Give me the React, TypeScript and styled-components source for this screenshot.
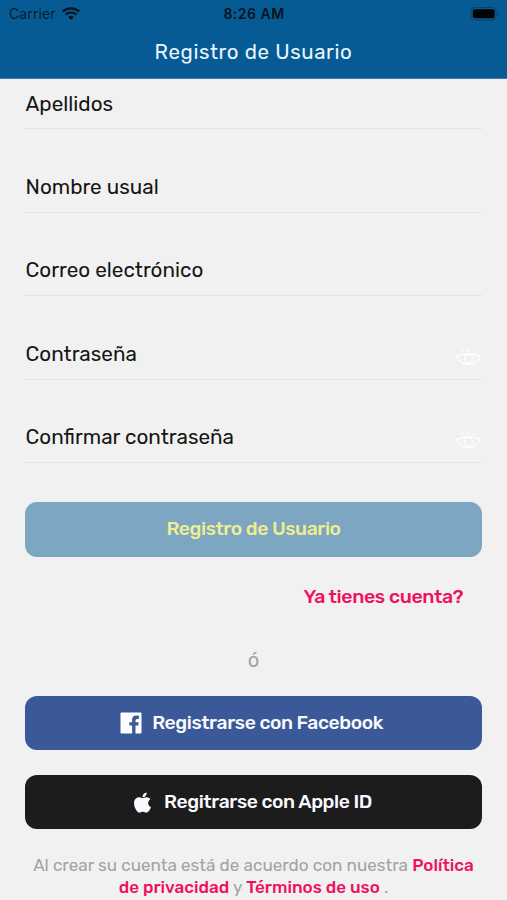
import React from 'react';
import styled, { createGlobalStyle } from 'styled-components';
import { FaApple } from 'react-icons/fa';

const GlobalStyle = createGlobalStyle`
  * { box-sizing: border-box; }
  body { margin: 0; background: #f1f1f1; }
`;

const Screen = styled.main`
  width: 507px;
  height: 900px;
  overflow: hidden;
  display: flex;
  flex-direction: column;
  background: #f1f1f1;
  color: #161616;
  font-family: Rubik, Roboto, sans-serif;
`;

const Header = styled.header`
  flex: none;
  height: 79px;
  background: #075b94;
  border-bottom: 1px solid #3c7ba8;
`;

const StatusBar = styled.div`
  height: 27px;
  padding: 1px 8px 0 9px;
  display: grid;
  grid-template-columns: 1fr auto 1fr;
  align-items: center;
  color: #07131c;
  font-family: Inter, sans-serif;
  font-size: 14px;
  line-height: 26px;
`;

const Carrier = styled.div`
  display: flex;
  align-items: center;
  gap: 6px;
  color: #051c2e;
  letter-spacing: 0.1px;
`;

const Clock = styled.time`
  font-size: 14px;
  font-weight: 600;
  letter-spacing: 0.5px;
`;

const BatterySlot = styled.div`
  display: flex;
  justify-content: flex-end;
`;

const Title = styled.h1`
  margin: 0;
  padding-top: 12px;
  text-align: center;
  color: #e9f5ff;
  font-size: 20.5px;
  line-height: 26px;
  font-weight: 400;
  letter-spacing: 0.6px;
`;

const Form = styled.form`
  padding: 0 25px;
  display: flex;
  flex-direction: column;
`;

const Fields = styled.div`
  height: 384px;
  display: flex;
  flex-direction: column;
  justify-content: flex-end;
`;

const Field = styled.div<{ $first?: boolean }>`
  flex: none;
  height: ${({ $first }) => ($first ? '50px' : '83.5px')};
  padding-bottom: ${({ $first }) => ($first ? '11px' : '11.6px')};
  border-bottom: 1px solid #e2e2e2;
  display: flex;
  align-items: flex-end;
  justify-content: space-between;
`;

const Label = styled.label`
  padding-left: 0.5px;
  font-size: 20.7px;
  line-height: 26px;
  white-space: nowrap;
`;

const Button = styled.button<{ $bg: string; $color?: string; $gap?: number }>`
  flex: none;
  height: 54.5px;
  padding: 0;
  border: 0;
  border-radius: 12px;
  display: flex;
  align-items: center;
  justify-content: center;
  gap: ${({ $gap = 0 }) => $gap}px;
  background: ${({ $bg }) => $bg};
  color: ${({ $color = '#f7f9ff' }) => $color};
  font-family: inherit;
  font-size: 19.3px;
  line-height: 24px;
  font-weight: 500;
  letter-spacing: -0.41px;
`;

const SocialButton = styled(Button)`
  padding: 1px 4px 0 0;
`;

const SubmitRow = styled.div`
  padding-top: 39px;
  display: grid;
`;

const LoginLink = styled.a`
  align-self: flex-end;
  margin: 27px 19px 0 0;
  color: #f01060;
  font-size: 19.5px;
  line-height: 26px;
  font-weight: 500;
  letter-spacing: -0.38px;
`;

const Divider = styled.div`
  margin: 37px 0 23px;
  height: 26px;
  text-align: center;
  color: #a2a2a4;
  font-size: 20px;
  line-height: 26px;
`;

const SocialButtons = styled.div`
  display: grid;
  gap: 24.5px;
`;

const Terms = styled.p`
  margin: 25px -10px 0;
  text-align: center;
  color: #a2a2a6;
  font-size: 17.1px;
  line-height: 22px;
  white-space: nowrap;
`;

const TermsLink = styled.a`
  color: #f01060;
  font-weight: 500;
`;

const WifiIcon = () => (
  <svg width="18" height="14" viewBox="0 0 18 14" fill="none" stroke="#07131c">
    <path d="M.8 4.5C5.2.3 12.8.3 17.2 4.5" strokeWidth="2.4" />
    <path d="M3.6 7.6C6.5 4.8 11.5 4.8 14.4 7.6" strokeWidth="2.2" />
    <path d="M6.1 10.1Q9 7.5 11.9 10.1L9 13Z" fill="#07131c" stroke="none" />
  </svg>
);

const BatteryIcon = () => (
  <svg width="29" height="14" viewBox="0 0 29 14">
    <rect x="1" y=".5" width="25" height="12.5" rx="3.6" fill="#075b94" stroke="#0a4268" />
    <rect x="2.8" y="2.3" width="21.7" height="9" rx="2" fill="#020406" />
    <path d="M27.2 4.8q1.3.5 1.3 2T27.2 8.8z" fill="#0a4268" />
  </svg>
);

const EyeIcon = () => (
  <svg width="27" height="20" viewBox="0 0 27 20" fill="none" stroke="#fff" strokeLinecap="round">
    <path d="M1.5 9.5Q13.5 4.5 25.5 9.5Q21 17.5 13.5 17.5Q6 17.5 1.5 9.5Z" strokeWidth="1.4" />
    <circle cx="13.5" cy="11.8" r="4.3" strokeWidth="1.1" />
    <path d="M13.5 1.5v3M7.3 2.5l.9 2.8M19.7 2.5l-.9 2.8" strokeWidth="1" />
  </svg>
);

const FacebookIcon = () => (
  <svg width="22" height="22" viewBox="0 0 22 22">
    <path
      fill="#fff"
      d="M1.2.5h19.6q.7 0 .7.7v19.6q0 .7-.7.7h-5.3v-8h2.7l.5-3.2h-3.2V8.5q0-1.6 1.7-1.6h1.7V3.8q-1.2-.2-2.4-.2-4.4 0-4.4 4.4v2.3H9.3v3.2h2.8v8H1.2q-.7 0-.7-.7V1.2q0-.7.7-.7Z"
    />
  </svg>
);

const fields = [
  { label: 'Apellidos' },
  { label: 'Nombre usual' },
  { label: 'Correo electrónico' },
  { label: 'Contraseña', secret: true },
  { label: 'Confirmar contraseña', secret: true },
];

export default function App() {
  return (
    <>
      <GlobalStyle />
      <Screen>
        <Header>
          <StatusBar>
            <Carrier>Carrier <WifiIcon /></Carrier>
            <Clock>8:26 AM</Clock>
            <BatterySlot><BatteryIcon /></BatterySlot>
          </StatusBar>
          <Title>Registro de Usuario</Title>
        </Header>
        <Form>
          <Fields>
            {fields.map(({ label, secret }, i) => (
              <Field key={label} $first={i === 0}>
                <Label>{label}</Label>
                {secret && <EyeIcon />}
              </Field>
            ))}
          </Fields>
          <SubmitRow>
            <Button type="button" $bg="#7ca6c1" $color="#eeed91">Registro de Usuario</Button>
          </SubmitRow>
          <LoginLink>Ya tienes cuenta?</LoginLink>
          <Divider>ó</Divider>
          <SocialButtons>
            <SocialButton type="button" $bg="#3b5998" $gap={10}>
              <FacebookIcon />Registrarse con Facebook
            </SocialButton>
            <SocialButton type="button" $bg="#1c1c1c" $gap={10}>
              <FaApple size={23} />Regitrarse con Apple ID
            </SocialButton>
          </SocialButtons>
          <Terms>
            Al crear su cuenta está de acuerdo con nuestra <TermsLink>Política</TermsLink>
            <br />
            <TermsLink>de privacidad</TermsLink> y <TermsLink>Términos de uso</TermsLink> .
          </Terms>
        </Form>
      </Screen>
    </>
  );
}
